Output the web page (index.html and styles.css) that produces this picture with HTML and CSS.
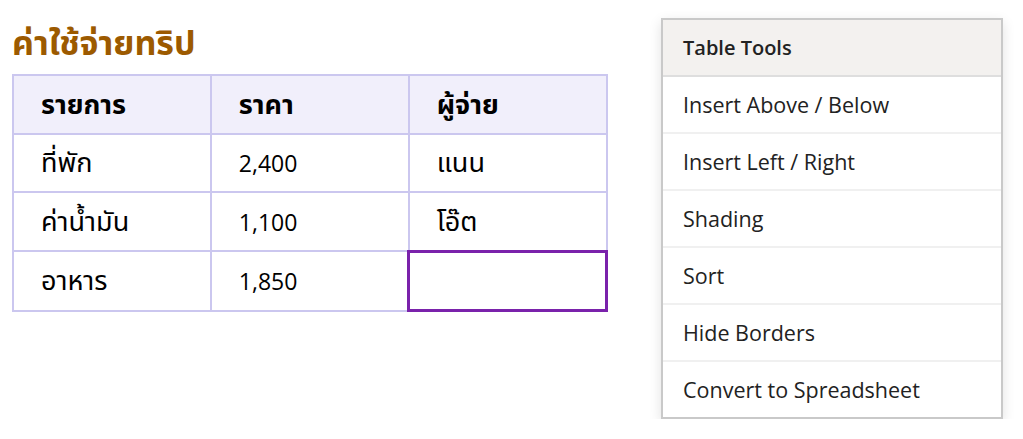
FILE: index.html
```html
<!DOCTYPE html>
<html lang="th">
<head>
    <meta charset="UTF-8">
    <meta name="viewport" content="width=device-width, initial-scale=1.0">
    <title>ค่าใช้จ่ายทริป</title>
    <link rel="stylesheet" href="styles.css">
</head>
<body>
    <div class="page">
        <main class="doc">
            <h1 class="doc-title">ค่าใช้จ่ายทริป</h1>
            <table class="trip-table">
                <thead>
                    <tr>
                        <th><span class="thai">รายการ</span></th>
                        <th><span class="thai">ราคา</span></th>
                        <th><span class="thai">ผู้จ่าย</span></th>
                    </tr>
                </thead>
                <tbody>
                    <tr>
                        <td><span class="thai">ที่พัก</span></td>
                        <td>2,400</td>
                        <td><span class="thai">แนน</span></td>
                    </tr>
                    <tr>
                        <td><span class="thai">ค่าน้ำมัน</span></td>
                        <td>1,100</td>
                        <td><span class="thai">โอ๊ต</span></td>
                    </tr>
                    <tr>
                        <td><span class="thai">อาหาร</span></td>
                        <td>1,850</td>
                        <td class="selected"></td>
                    </tr>
                </tbody>
            </table>
        </main>

        <aside class="tools-menu">
            <div class="tools-header">Table Tools</div>
            <ul class="tools-list">
                <li>Insert Above / Below</li>
                <li>Insert Left / Right</li>
                <li>Shading</li>
                <li>Sort</li>
                <li>Hide Borders</li>
                <li>Convert to Spreadsheet</li>
            </ul>
        </aside>
    </div>
</body>
</html>
```

FILE: styles.css
```css
body {
    margin: 0;
    background: #ffffff;
    font-family: "Open Sans", "Noto Sans", "Noto Sans Thai", Tahoma, sans-serif;
    color: #000;
}

.page {
    display: flex;
    align-items: flex-start;
    padding: 18px 20px 0 12px;
}

.doc {
    width: 596px;
}

.doc-title {
    margin: 2px 0 10px;
    font-size: 34px;
    line-height: 44px;
    font-weight: bold;
    color: #9c5a00;
}

.trip-table {
    border-collapse: collapse;
    width: 596px;
    table-layout: fixed;
}

.trip-table th,
.trip-table td {
    border: 2px solid #cbc7ef;
    height: 56.5px;
    padding: 0 0 0 27px;
    text-align: left;
    font-size: 23px;
    line-height: 30px;
}

.trip-table .thai {
    font-size: 27px;
}

.trip-table th {
    background: #f1effb;
    font-weight: bold;
}

.trip-table td.selected {
    border: 3px solid #7a22ab;
}

.tools-menu {
    margin-left: auto;
    width: 338px;
    border: 2px solid #c9c9c9;
    background: #fff;
    box-shadow: 0 4px 12px rgba(0, 0, 0, 0.12);
    color: #222;
}

.tools-header {
    background: #f3f1ef;
    border-bottom: 2px solid #dedede;
    height: 55px;
    line-height: 55px;
    padding-left: 20px;
    font-size: 20px;
    font-weight: 600;
}

.tools-list {
    list-style: none;
    margin: 0;
    padding: 0;
}

.tools-list li {
    height: 55px;
    line-height: 55px;
    padding-left: 20px;
    font-size: 21.5px;
    border-bottom: 2px solid #f0f0f0;
}

.tools-list li:last-child {
    border-bottom: none;
}
```
